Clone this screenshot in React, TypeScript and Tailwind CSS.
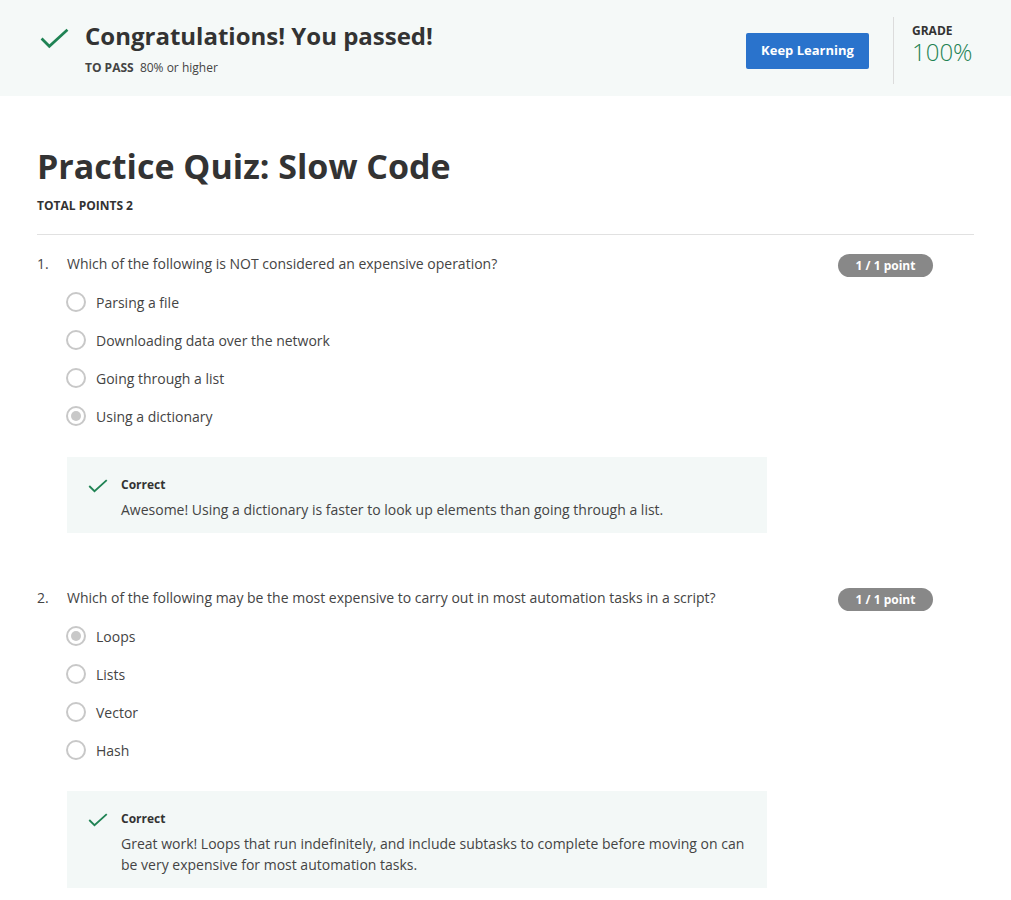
import React from 'react';

type Question = {
  number: number;
  text: string;
  options: string[];
  selected: number;
  feedback: string;
};

const questions: Question[] = [
  {
    number: 1,
    text: 'Which of the following is NOT considered an expensive operation?',
    options: ['Parsing a file', 'Downloading data over the network', 'Going through a list', 'Using a dictionary'],
    selected: 3,
    feedback: 'Awesome! Using a dictionary is faster to look up elements than going through a list.',
  },
  {
    number: 2,
    text: 'Which of the following may be the most expensive to carry out in most automation tasks in a script?',
    options: ['Loops', 'Lists', 'Vector', 'Hash'],
    selected: 0,
    feedback:
      'Great work! Loops that run indefinitely, and include subtasks to complete before moving on can be very expensive for most automation tasks.',
  },
];

const Check = ({ className }: { className: string }) => (
  <svg viewBox="0 0 28 20" className={className} fill="none">
    <polyline points="1.5,10 9,17.5 26.5,1.5" stroke="#1f8354" strokeWidth="2.6" />
  </svg>
);

const Radio = ({ checked }: { checked: boolean }) => (
  <span className="flex h-[20px] w-[20px] shrink-0 items-center justify-center rounded-full border-2 border-[#c8c8c8] bg-white">
    {checked && <span className="h-[10px] w-[10px] rounded-full bg-[#c8c8c8]" />}
  </span>
);

export default function App() {
  return (
    <div className="min-h-screen bg-white font-['Open_Sans',sans-serif] text-[#333]">
      <div className="flex h-[96px] items-center justify-between bg-[#f5f9f8] pl-[40px] pr-[38px]">
        <div className="flex items-start">
          <Check className="mt-[8px] h-[21px] w-[29px] shrink-0" />
          <div className="ml-[16px]">
            <h2 className="text-[24px] font-bold leading-[32px] text-[#333]">Congratulations! You passed!</h2>
            <p className="mt-[8px] text-[12px] leading-[16px] text-[#444]">
              <span className="font-bold">TO PASS</span>&nbsp; 80% or higher
            </p>
          </div>
        </div>
        <div className="flex items-center pt-[4px]">
          <button className="mt-[2px] h-[36px] w-[123px] rounded-[2px] bg-[#2a73cc] text-[13px] font-bold text-white">
            Keep Learning
          </button>
          <div className="ml-[24px] h-[67px] w-px bg-[#dcdcdc]" />
          <div className="ml-[18px] mt-[-8px] w-[61px]">
            <div className="text-[12px] font-bold leading-[12px] text-[#333]">GRADE</div>
            <div className="text-[24px] font-light leading-[30px] text-[#1f8354]">100%</div>
          </div>
        </div>
      </div>

      <div className="px-[37px] pt-[48px] pb-[40px]">
        <h1 className="text-[34px] font-bold leading-[44px] text-[#333]">Practice Quiz: Slow Code</h1>
        <div className="mt-[10px] text-[12px] font-bold leading-[16px] text-[#333]">TOTAL POINTS 2</div>
        <div className="mt-[20px] border-t border-[#e1e1e1]" />

        {questions.map((q, i) => (
          <div key={q.number} className={i === 0 ? 'pt-[19px]' : 'pt-[55px]'}>
            <div className="flex items-start justify-between pr-[41px]">
              <div className="flex text-[14px] leading-[20px] text-[#444]">
                <span className="w-[30px] shrink-0">{q.number}.</span>
                <span>{q.text}</span>
              </div>
              <span className="flex h-[23px] w-[95px] shrink-0 items-center justify-center rounded-full bg-[#888] text-[12px] font-bold text-white">
                1 / 1 point
              </span>
            </div>
            <div className="mt-[6px] pl-[29px]">
              {q.options.map((opt, j) => (
                <div key={opt} className="flex h-[38px] items-center">
                  <Radio checked={j === q.selected} />
                  <span className="ml-[10px] text-[14px] text-[#444]">{opt}</span>
                </div>
              ))}
            </div>
            <div className="ml-[30px] mt-[22px] w-[700px] bg-[#f3f8f7] pl-[21px] pr-[20px] pt-[20px] pb-[13px]">
              <div className="flex items-start">
                <Check className="mt-[2px] h-[14px] w-[20px] shrink-0" />
                <div className="ml-[13px]">
                  <div className="text-[12px] font-bold leading-[16px] text-[#333]">Correct</div>
                  <p className="mt-[6px] text-[14px] leading-[21px] text-[#444]">{q.feedback}</p>
                </div>
              </div>
            </div>
          </div>
        ))}
      </div>
    </div>
  );
}
